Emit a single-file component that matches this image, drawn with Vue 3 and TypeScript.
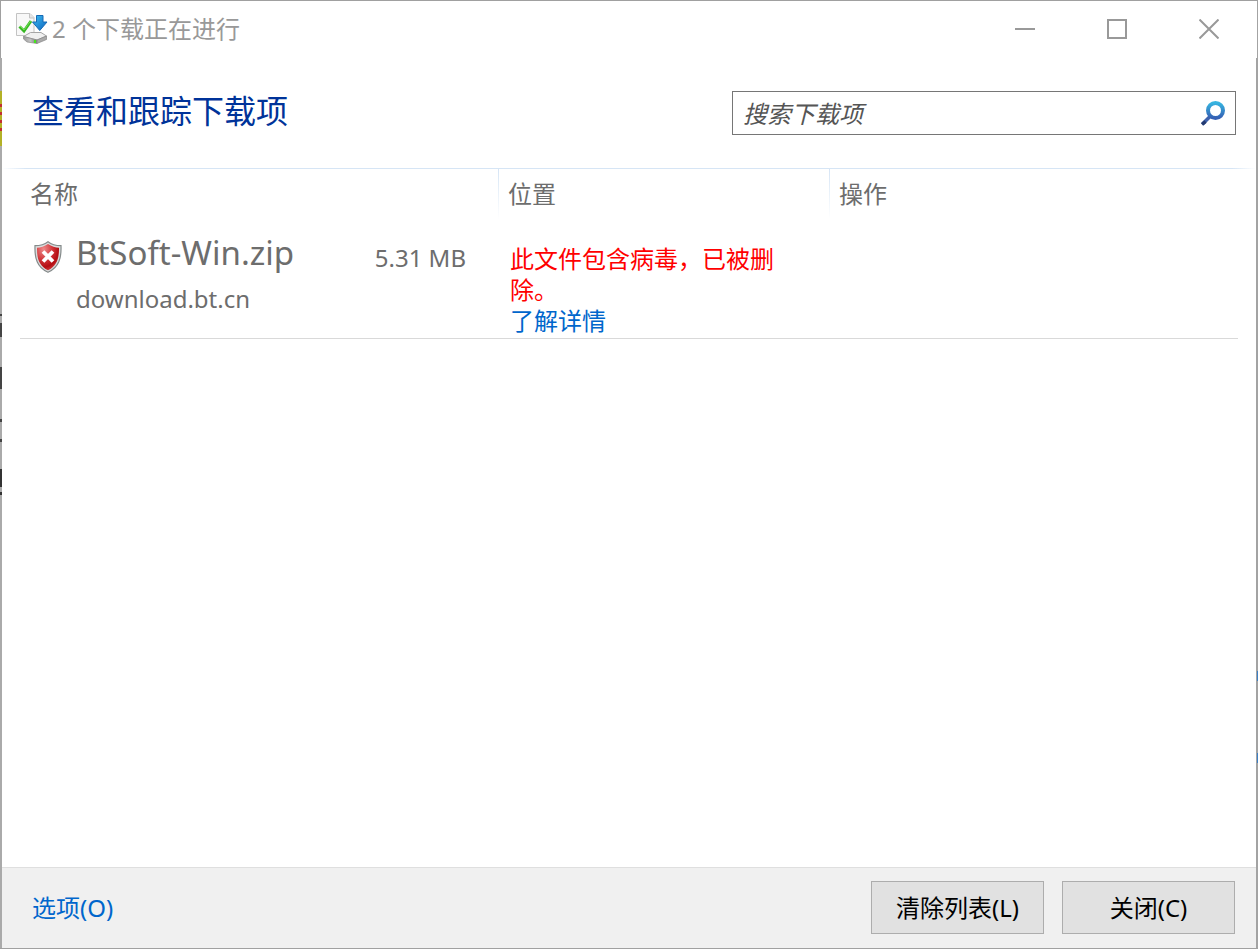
<script setup lang="ts">
import { ref } from 'vue'

interface Download {
  name: string
  host: string
  size: string
  status: string
  link: string
}

const query = ref('')
const downloads = ref<Download[]>([
  {
    name: 'BtSoft-Win.zip',
    host: 'download.bt.cn',
    size: '5.31 MB',
    status: '此文件包含病毒，已被删除。',
    link: '了解详情',
  },
])
</script>

<template>
  <div class="window">
    <div class="edge edge-left" aria-hidden="true"></div>
    <div class="edge edge-right" aria-hidden="true"></div>

    <header class="titlebar">
      <svg class="app-icon" viewBox="0 0 32 32" aria-hidden="true">
        <defs>
          <linearGradient id="arrow" x1="0" y1="0" x2="1" y2="1">
            <stop offset="0" stop-color="#3fc0f4" />
            <stop offset="1" stop-color="#0b62bd" />
          </linearGradient>
          <linearGradient id="drive" x1="0" y1="0" x2="1" y2="0">
            <stop offset="0" stop-color="#999" />
            <stop offset="0.5" stop-color="#c4c4c4" />
            <stop offset="1" stop-color="#777" />
          </linearGradient>
        </defs>
        <path d="M.5 .5h13.500l4 4V22.500H.5z" fill="#f8f8f8" stroke="#c3c3c3" />
        <path d="M13.500 .5v4.500H18" fill="#e6e6e6" stroke="#c3c3c3" />
        <path d="M7.500 23.500l7-4h10.500l5.500 3.500-9.500 4z" fill="#f0f0f0" stroke="#a6a6a6" />
        <path d="M7.500 23.500l13.500 3.500v3.500l-10-1.500-3.500-3z" fill="url(#drive)" stroke="#8b8b8b" stroke-width=".7" />
        <path d="M21 27l9.500-4v3.500L21 30.500z" fill="#aaa" stroke="#858585" stroke-width=".7" />
        <path d="M18 27h2v3h-2z" fill="#45e51b" />
        <path d="M3.500 13.500l4.500 4.500 7-10" fill="none" stroke="#38b824" stroke-width="3" />
        <path d="M4 13l4 4 6.500-9" fill="none" stroke="#72df53" stroke-width="1" />
        <path d="M20.500 2.500h6.500v6.500h4l-7.250 8.500L16.500 9h4z" fill="url(#arrow)" stroke="#176ab5" />
      </svg>
      <h1 class="title">2 个下载正在进行</h1>
      <div class="captions">
        <button type="button" aria-label="最小化">
          <svg viewBox="0 0 20 20"><path d="M0 10h20" /></svg>
        </button>
        <button type="button" aria-label="最大化">
          <svg viewBox="0 0 20 20"><path d="M1 1h18v18H1z" /></svg>
        </button>
        <button type="button" aria-label="关闭窗口">
          <svg viewBox="0 0 20 20"><path d="M.5 .5l19 19M19.500 .5l-19 19" /></svg>
        </button>
      </div>
    </header>

    <div class="toolbar">
      <h2>查看和跟踪下载项</h2>
      <form class="search" role="search" @submit.prevent>
        <input v-model="query" type="text" placeholder="搜索下载项" aria-label="搜索下载项" />
        <button type="submit" aria-label="搜索">
          <svg viewBox="0 0 26 26">
            <defs>
              <linearGradient id="lens" x1="0" y1="0" x2="0" y2="1">
                <stop offset="0" stop-color="#36b4e0" />
                <stop offset="1" stop-color="#3560b4" />
              </linearGradient>
            </defs>
            <path d="M11 15.500L2.500 24" stroke="#3f62ad" stroke-width="3.500" />
            <path d="M5.500 21.500L2 24.500" stroke="#233a70" stroke-width="3.500" />
            <circle cx="15.500" cy="10.500" r="7.500" fill="#fff" stroke="url(#lens)" stroke-width="4" />
          </svg>
        </button>
      </form>
    </div>

    <div class="rule"></div>

    <main>
      <table>
        <colgroup>
          <col class="col-name" />
          <col class="col-place" />
          <col />
        </colgroup>
        <thead>
          <tr>
            <th scope="col">名称</th>
            <th scope="col">位置</th>
            <th scope="col">操作</th>
          </tr>
        </thead>
        <tbody>
          <tr v-for="item in downloads" :key="item.name">
            <td>
              <div class="file">
                <svg class="shield" viewBox="0 0 28 32" aria-hidden="true">
                  <defs>
                    <radialGradient id="red" cx=".3" cy=".2" r=".9">
                      <stop offset="0" stop-color="#ee8a8a" />
                      <stop offset=".45" stop-color="#d1363a" />
                      <stop offset=".75" stop-color="#b30d12" />
                      <stop offset="1" stop-color="#dd4a4a" />
                    </radialGradient>
                  </defs>
                  <path d="M14 .7C10.500 3.500 5.500 4.700 1 4.700.5 17 3 26.500 14 31.300 25 26.500 27.500 17 27 4.700 22.500 4.700 17.500 3.500 14 .7z" fill="#d9dcdc" stroke="#858b8b" stroke-width="1.200" />
                  <path d="M14 3C10.500 5.500 6.500 6.500 3 6.700 2.800 17 5 25 14 29.300 23 25 25.200 17 25 6.700 21.500 6.500 17.500 5.500 14 3z" fill="url(#red)" />
                  <path d="M9 10.500l10 10M19 10.500l-10 10" stroke="#fff" stroke-width="3.800" />
                </svg>
                <div class="names">
                  <span class="name">{{ item.name }}</span>
                  <span class="host">{{ item.host }}</span>
                </div>
                <span class="size">{{ item.size }}</span>
              </div>
            </td>
            <td>
              <p class="warning">{{ item.status }}</p>
              <a class="details" href="#">{{ item.link }}</a>
            </td>
            <td></td>
          </tr>
        </tbody>
      </table>
    </main>

    <footer>
      <a href="#">选项(O)</a>
      <div class="actions">
        <button type="button">清除列表(L)</button>
        <button type="button">关闭(C)</button>
      </div>
    </footer>
  </div>
</template>

<style>
body {
  margin: 0;
}
</style>

<style scoped>
.window {
  position: relative;
  box-sizing: border-box;
  min-height: 100vh;
  display: flex;
  flex-direction: column;
  padding: 0 2px;
  border-top: 1px solid #a0a0a0;
  border-bottom: 1px solid #a0a0a0;
  background: #fff;
  color: #6d6d6d;
  font: 24px/31px 'Noto Sans', 'Noto Sans CJK SC', sans-serif;
}
.edge {
  position: absolute;
  top: 0;
  bottom: 0;
}
/* Slivers of the windows behind show through the frame. */
.edge-left {
  left: 0;
  width: 2px;
  background:
    repeating-linear-gradient(#c33030 0 3px, #b3b126 3px 8px) 0 103px / 2px 30px no-repeat,
    linear-gradient(#b3b126, #b3b126) 0 90px / 2px 55px no-repeat,
    linear-gradient(#444, #444) 0 313px / 2px 2px no-repeat,
    linear-gradient(#444, #444) 0 322px / 2px 14px no-repeat,
    linear-gradient(#444, #444) 0 366px / 2px 22px no-repeat,
    linear-gradient(#444, #444) 0 418px / 2px 3px no-repeat,
    linear-gradient(#444, #444) 0 438px / 2px 3px no-repeat,
    linear-gradient(#333, #333) 0 468px / 2px 18px no-repeat,
    linear-gradient(#333, #333) 0 491px / 2px 3px no-repeat,
    linear-gradient(#a0a0a0, #a0a0a0) 0 0 / 1px 57px no-repeat,
    linear-gradient(#fff, #fff) 0 0 / 2px 57px no-repeat,
    #aaa;
}
.edge-right {
  right: 0;
  width: 2px;
  background:
    linear-gradient(#3d7fc4, #3d7fc4) 1px 670px / 1px 10px no-repeat,
    linear-gradient(#3d7fc4, #3d7fc4) 1px 752px / 1px 10px no-repeat,
    linear-gradient(#fff, #fff) 0 0 / 1px 57px no-repeat,
    #a3a3a3;
}
.titlebar {
  box-sizing: border-box;
  display: flex;
  align-items: center;
  height: 57px;
  padding: 0 1px 2px 14px;
}
.app-icon {
  width: 32px;
  height: 32px;
}
.title {
  margin: 0 0 0 4px;
  color: #999;
  font-size: 24px;
  font-weight: 400;
}
.captions {
  display: flex;
  align-self: stretch;
  margin-left: auto;
}
.captions button {
  display: flex;
  align-items: center;
  justify-content: center;
  width: 92px;
  padding: 0;
  border: 0;
  background: none;
}
.captions svg {
  width: 20px;
  height: 20px;
  fill: none;
  stroke: #999;
  stroke-width: 2;
}
.toolbar {
  display: flex;
  align-items: center;
  justify-content: space-between;
  gap: 24px;
  height: 110px;
  padding: 0 20px 0 30px;
}
h2 {
  margin: 0 0 4px;
  color: #003399;
  font-size: 32px;
  line-height: 42px;
  font-weight: 400;
}
.search {
  box-sizing: border-box;
  display: flex;
  flex: 0 1 504px;
  height: 44px;
  border: 1px solid #767676;
}
.search input {
  flex: 1;
  min-width: 0;
  padding: 0 0 0 10px;
  border: 0;
  outline: 0;
  background: none;
  color: #555;
  font: inherit;
  font-style: italic;
}
.search input::placeholder {
  color: #555;
  opacity: 1;
}
.search button {
  display: flex;
  align-items: center;
  padding: 0 9px;
  border: 0;
  background: none;
}
.search svg {
  width: 26px;
  height: 26px;
}
.rule {
  height: 1px;
  background: linear-gradient(90deg, #fff, #d6e5f5 24px, #d6e5f5 calc(100% - 24px), #fff);
}
main {
  flex: 1;
  padding: 0 18px;
}
table {
  width: 100%;
  table-layout: fixed;
  border-collapse: collapse;
}
.col-name {
  width: 478px;
}
.col-place {
  width: 331px;
}
th {
  height: 48px;
  padding: 0 10px 2px;
  font-weight: 400;
  text-align: left;
}
th + th {
  background: linear-gradient(#d6e5f5, #fff) 0 0 / 1px 50px no-repeat;
}
td {
  padding: 24px 36px 2px 12px;
  border-bottom: 1px solid #d9d9d9;
  vertical-align: top;
}
td:first-child {
  padding: 10px 32px 0 14px;
}
.file {
  display: flex;
  align-items: flex-start;
}
.shield {
  width: 28px;
  height: 32px;
  margin-top: 12px;
}
.names {
  display: flex;
  flex: 1;
  flex-direction: column;
  min-width: 0;
  margin-left: 14px;
}
.name {
  font-size: 33px;
  line-height: 48px;
}
.host {
  line-height: 44px;
}
.size {
  margin-top: 13px;
}
.warning {
  margin: 0;
  color: #f00;
}
a {
  color: #0066cc;
  text-decoration: none;
}
footer {
  box-sizing: border-box;
  display: flex;
  align-items: center;
  justify-content: space-between;
  height: 81px;
  padding: 0 21px 2px 30px;
  border-top: 1px solid #dfdfdf;
  background: #f0f0f0;
}
.actions {
  display: flex;
  gap: 18px;
}
.actions button {
  width: 173px;
  height: 53px;
  padding: 0;
  border: 1px solid #adadad;
  border-radius: 0;
  background: #e1e1e1;
  color: #000;
  font: inherit;
}
</style>
